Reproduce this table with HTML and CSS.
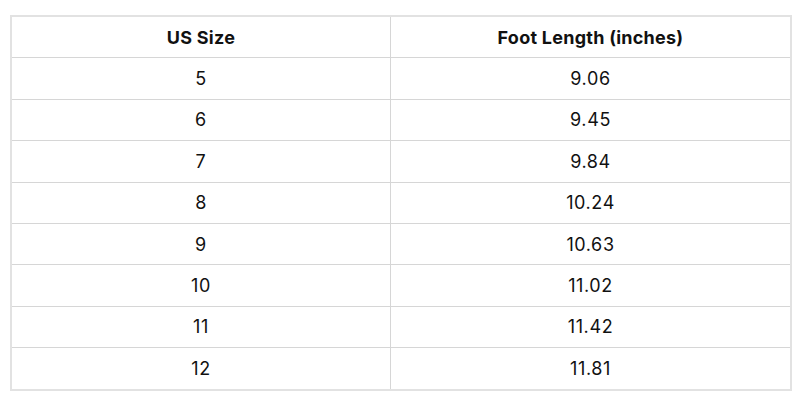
FILE: index.html
```html
<!DOCTYPE html>
<html>
<head>
<meta charset="utf-8">
<link rel="stylesheet" href="styles.css">
</head>
<body>
<table class="size-table">
  <thead>
    <tr><th>US Size</th><th>Foot Length (inches)</th></tr>
  </thead>
  <tbody>
    <tr><td>5</td><td>9.06</td></tr>
    <tr><td>6</td><td>9.45</td></tr>
    <tr><td>7</td><td>9.84</td></tr>
    <tr><td>8</td><td>10.24</td></tr>
    <tr><td>9</td><td>10.63</td></tr>
    <tr><td>10</td><td>11.02</td></tr>
    <tr><td>11</td><td>11.42</td></tr>
    <tr><td>12</td><td>11.81</td></tr>
  </tbody>
</table>
</body>
</html>
```
FILE: styles.css
```css
html, body {
  margin: 0;
  background: #ffffff;
}
body {
  padding: 15px 0 0 10px;
  font-family: Inter, "Liberation Sans", sans-serif;
  color: #111111;
}
.size-table {
  width: 782px;
  border-collapse: collapse;
  border: 2px solid #e2e2e2;
  table-layout: fixed;
}
.size-table th,
.size-table td {
  border: 1px solid #d6d6d6;
  height: 40.4px;
  padding: 0;
  text-align: center;
  vertical-align: middle;
  font-size: 18px;
}
.size-table th {
  font-weight: 700;
  letter-spacing: 0.25px;
}
.size-table td {
  font-weight: 400;
  letter-spacing: 0.6px;
}
.size-table th:first-child,
.size-table td:first-child {
  width: 378px;
}
```
